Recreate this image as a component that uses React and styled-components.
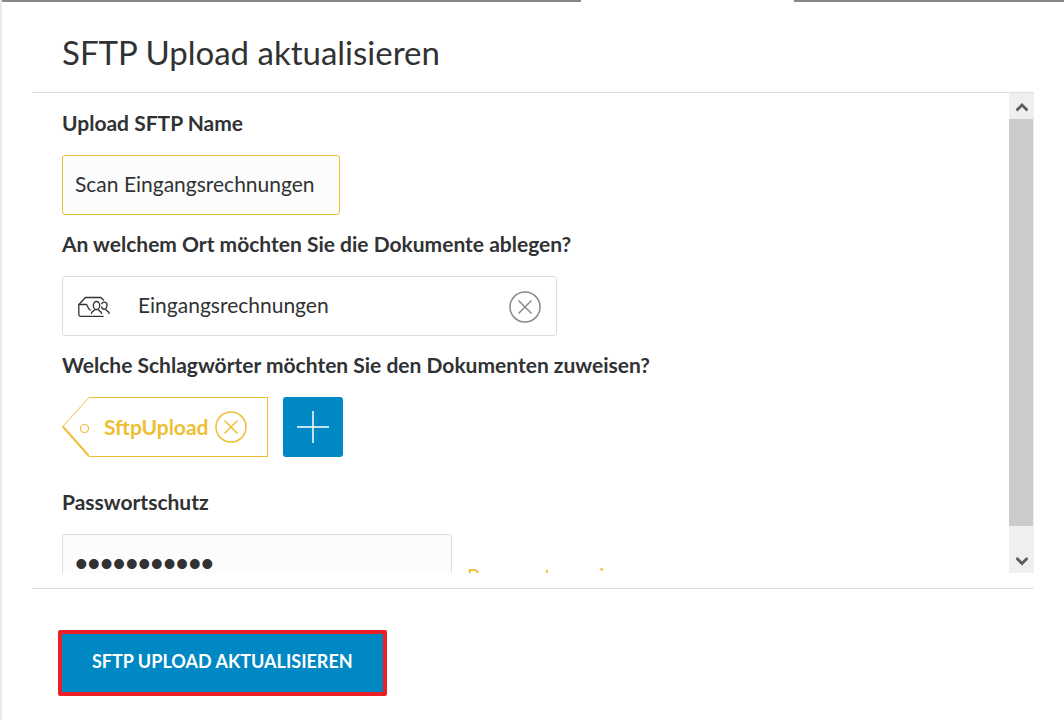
import React, { useState } from "react"
import styled, { createGlobalStyle } from "styled-components"

const colors = {
  text: "#303234",
  yellow: "#eebf33",
  blue: "#0088c4",
  red: "#ec1f27",
  line: "#dcdedf",
  grey: "#8a8a8a",
}

const GlobalStyle = createGlobalStyle`
  * {
    box-sizing: border-box;
  }
  body {
    margin: 0;
    background: #ffffff;
    color: ${colors.text};
    font-family: Lato, "Open Sans", sans-serif;
  }
  button, input {
    font-family: inherit;
    color: inherit;
  }
`

const Page = styled.div`
  display: flex;
  flex-direction: column;
  height: 100vh;
  border-left: 2px solid #e6eaea;
`

const TopBar = styled.div`
  display: grid;
  grid-template-columns: 579fr 213fr 270fr;
  flex: none;
  height: 2px;
`

const TopBarPart = styled.div`
  background: ${props => (props.$active ? "#ffffff" : "#888687")};
`

const Dialog = styled.form`
  display: flex;
  flex-direction: column;
  flex: 1;
  min-height: 0;
  margin: 0 30px;
`

const Header = styled.header`
  padding: 29px 30px 18px;
  border-bottom: 1px solid ${colors.line};
`

const Title = styled.h1`
  margin: 0;
  font-size: 33px;
  line-height: 43px;
  font-weight: 400;
`

const Body = styled.div`
  display: flex;
  flex: 1;
  min-height: 0;
`

const Fields = styled.div`
  flex: 1;
  padding: 16px 30px 0;
  overflow: hidden;
`

const Field = styled.div`
  display: flex;
  flex-direction: column;
  align-items: flex-start;
  gap: 18px;
  margin-bottom: ${props => (props.$last ? 31 : 15)}px;
`

const Label = styled.label`
  font-size: 21px;
  line-height: 28px;
  font-weight: 700;
`

const TextInput = styled.input`
  width: 278px;
  height: 60px;
  padding: 0 12px 4px;
  border: 1px solid ${colors.yellow};
  border-radius: 3px;
  background: #fcfcfc;
  font-size: 21px;
  outline: none;
`

const PasswordInput = styled(TextInput)`
  width: 390px;
  padding: 0 12px;
  border-color: ${colors.line};
  font-family: "Liberation Sans", Arial, sans-serif;
  font-size: 36px;
`

const Location = styled.div`
  display: flex;
  align-items: center;
  width: 495px;
  height: 60px;
  padding: 1px 15px 0;
  border: 1px solid ${colors.line};
  border-radius: 3px;
`

const LocationInput = styled.input`
  flex: 1;
  min-width: 0;
  margin-left: 28px;
  padding: 0 0 4px;
  border: 0;
  background: none;
  font-size: 21px;
  outline: none;
`

const Row = styled.div`
  display: flex;
  align-items: center;
  gap: 15px;
`

const Tag = styled.div`
  display: flex;
  height: 60px;
  color: ${colors.yellow};
`

const TagBody = styled.div`
  display: flex;
  align-items: center;
  gap: 6px;
  padding: 0 20px 0 15px;
  border: 1px solid ${colors.yellow};
  border-left: 0;
`

const TagName = styled.span`
  font-size: 21px;
  line-height: 28px;
  font-weight: 700;
`

const RemoveButton = styled.button`
  display: flex;
  padding: 0;
  border: 0;
  background: none;
  color: ${props => props.$color};
`

const AddButton = styled.button`
  display: flex;
  align-items: center;
  justify-content: center;
  width: 60px;
  height: 60px;
  padding: 0;
  border: 0;
  border-radius: 3px;
  background: ${colors.blue};
`

const ShowLink = styled.a`
  color: ${colors.yellow};
  font-size: 21px;
  line-height: 24px;
  padding-top: 24px;
  text-decoration: none;
`

const ScrollTrack = styled.div`
  display: flex;
  flex-direction: column;
  width: 25px;
  background: #efefef;
`

const ScrollButton = styled.button`
  display: flex;
  align-items: center;
  justify-content: center;
  height: 26px;
  padding: 2px 0 0;
  border: 0;
  background: none;
`

const ScrollRail = styled.div`
  flex: 1;
`

const ScrollThumb = styled.div`
  height: 95%;
  margin-right: 1px;
  background: #cbcbcb;
`

const Footer = styled.footer`
  flex: none;
  margin-top: 15px;
  padding: 41px 26px 24px;
  border-top: 1px solid ${colors.line};
`

const SubmitButton = styled.button`
  height: 66px;
  padding: 0 30px 4px;
  border: 4px solid ${colors.red};
  border-radius: 2px;
  background: ${colors.blue};
  color: #ffffff;
  font-size: 18px;
  font-weight: 700;
  text-transform: uppercase;
`

const CloseIcon = () => (
  <svg width="32" height="32" viewBox="0 0 32 32" fill="none" stroke="currentColor" strokeWidth="1.5" aria-hidden="true">
    <circle cx="16" cy="16" r="15" />
    <path d="M9.5 9.5l13 13M22.5 9.5l-13 13" />
  </svg>
)

const SharedFolderIcon = () => (
  <svg width="32" height="22" viewBox="0 0 32 22" fill="none" stroke="#303234" strokeWidth="1.3" aria-hidden="true">
    <path d="M26 4.5L22.8 1.5H7.5L.8 8.5V18.5q0 1.8 1.8 1.8H25.5" />
    <path d="M.8 8.5H8.5C9.300 8.5 9.200 12 12.500 14.5" />
    <ellipse cx="18.5" cy="9.5" rx="3.2" ry="4" />
    <path d="M17.2 13C17.2 15.2 13.800 14 13.200 18M19.800 13C19.800 15.2 23.200 14 23.800 18" />
    <path d="M23.5 8.200C24.2 5.200 29.5 5.200 29 9.5C28.600 14.2 24.500 14.4 23.5 10.5M27.600 13C27.600 15.2 30.800 14 31.300 18" />
  </svg>
)

const TagTip = () => (
  <svg width="27" height="60" viewBox="0 0 27 60" fill="none" stroke="currentColor" aria-hidden="true">
    <path d="M27 .5L.8 29.5" />
    <path d="M.8 29.5L27 59" strokeWidth="2" />
    <circle cx="22.5" cy="31.5" r="4" strokeWidth="1.2" />
  </svg>
)

const Chevron = ({ down }) => (
  <svg width="12" height="10" viewBox="0 0 12 10" fill="none" stroke="#5c5c5c" strokeWidth="2.8" aria-hidden="true">
    <path d={down ? "M.5 2l5.500 5.500L11.500 2" : "M.5 8.500L6 3l5.500 5.500"} />
  </svg>
)

export default function App() {
  const [name, setName] = useState("Scan Eingangsrechnungen")
  const [location, setLocation] = useState("Eingangsrechnungen")
  const [password, setPassword] = useState("sftp-upload")
  const [tags, setTags] = useState(["SftpUpload"])

  return (
    <Page>
      <GlobalStyle />
      <TopBar>
        <TopBarPart />
        <TopBarPart $active />
        <TopBarPart />
      </TopBar>
      <Dialog onSubmit={e => e.preventDefault()}>
        <Header>
          <Title>SFTP Upload aktualisieren</Title>
        </Header>
        <Body>
          <Fields>
            <Field>
              <Label htmlFor="name">Upload SFTP Name</Label>
              <TextInput id="name" value={name} onChange={e => setName(e.target.value)} />
            </Field>
            <Field>
              <Label htmlFor="location">An welchem Ort möchten Sie die Dokumente ablegen?</Label>
              <Location>
                <SharedFolderIcon />
                <LocationInput id="location" value={location} onChange={e => setLocation(e.target.value)} />
                <RemoveButton type="button" $color={colors.grey} aria-label="Ort entfernen" onClick={() => setLocation("")}>
                  <CloseIcon />
                </RemoveButton>
              </Location>
            </Field>
            <Field $last>
              <Label htmlFor="add-tag">Welche Schlagwörter möchten Sie den Dokumenten zuweisen?</Label>
              <Row>
                {tags.map(tag => (
                  <Tag key={tag}>
                    <TagTip />
                    <TagBody>
                      <TagName>{tag}</TagName>
                      <RemoveButton
                        type="button"
                        $color={colors.yellow}
                        aria-label={`${tag} entfernen`}
                        onClick={() => setTags(tags.filter(t => t !== tag))}
                      >
                        <CloseIcon />
                      </RemoveButton>
                    </TagBody>
                  </Tag>
                ))}
                <AddButton id="add-tag" type="button">
                  <svg width="32" height="32" viewBox="0 0 32 32" stroke="#ffffff" strokeWidth="1.5" aria-hidden="true">
                    <path d="M16 0v32M0 16h32" />
                  </svg>
                </AddButton>
              </Row>
            </Field>
            <Field>
              <Label htmlFor="password">Passwortschutz</Label>
              <Row>
                <PasswordInput
                  id="password"
                  type="password"
                  value={password}
                  onChange={e => setPassword(e.target.value)}
                />
                <ShowLink href="#password">Passwort anzeigen</ShowLink>
              </Row>
            </Field>
          </Fields>
          <ScrollTrack>
            <ScrollButton type="button" aria-label="Nach oben">
              <Chevron />
            </ScrollButton>
            <ScrollRail>
              <ScrollThumb />
            </ScrollRail>
            <ScrollButton type="button" aria-label="Nach unten">
              <Chevron down />
            </ScrollButton>
          </ScrollTrack>
        </Body>
        <Footer>
          <SubmitButton type="submit">SFTP Upload aktualisieren</SubmitButton>
        </Footer>
      </Dialog>
    </Page>
  )
}
